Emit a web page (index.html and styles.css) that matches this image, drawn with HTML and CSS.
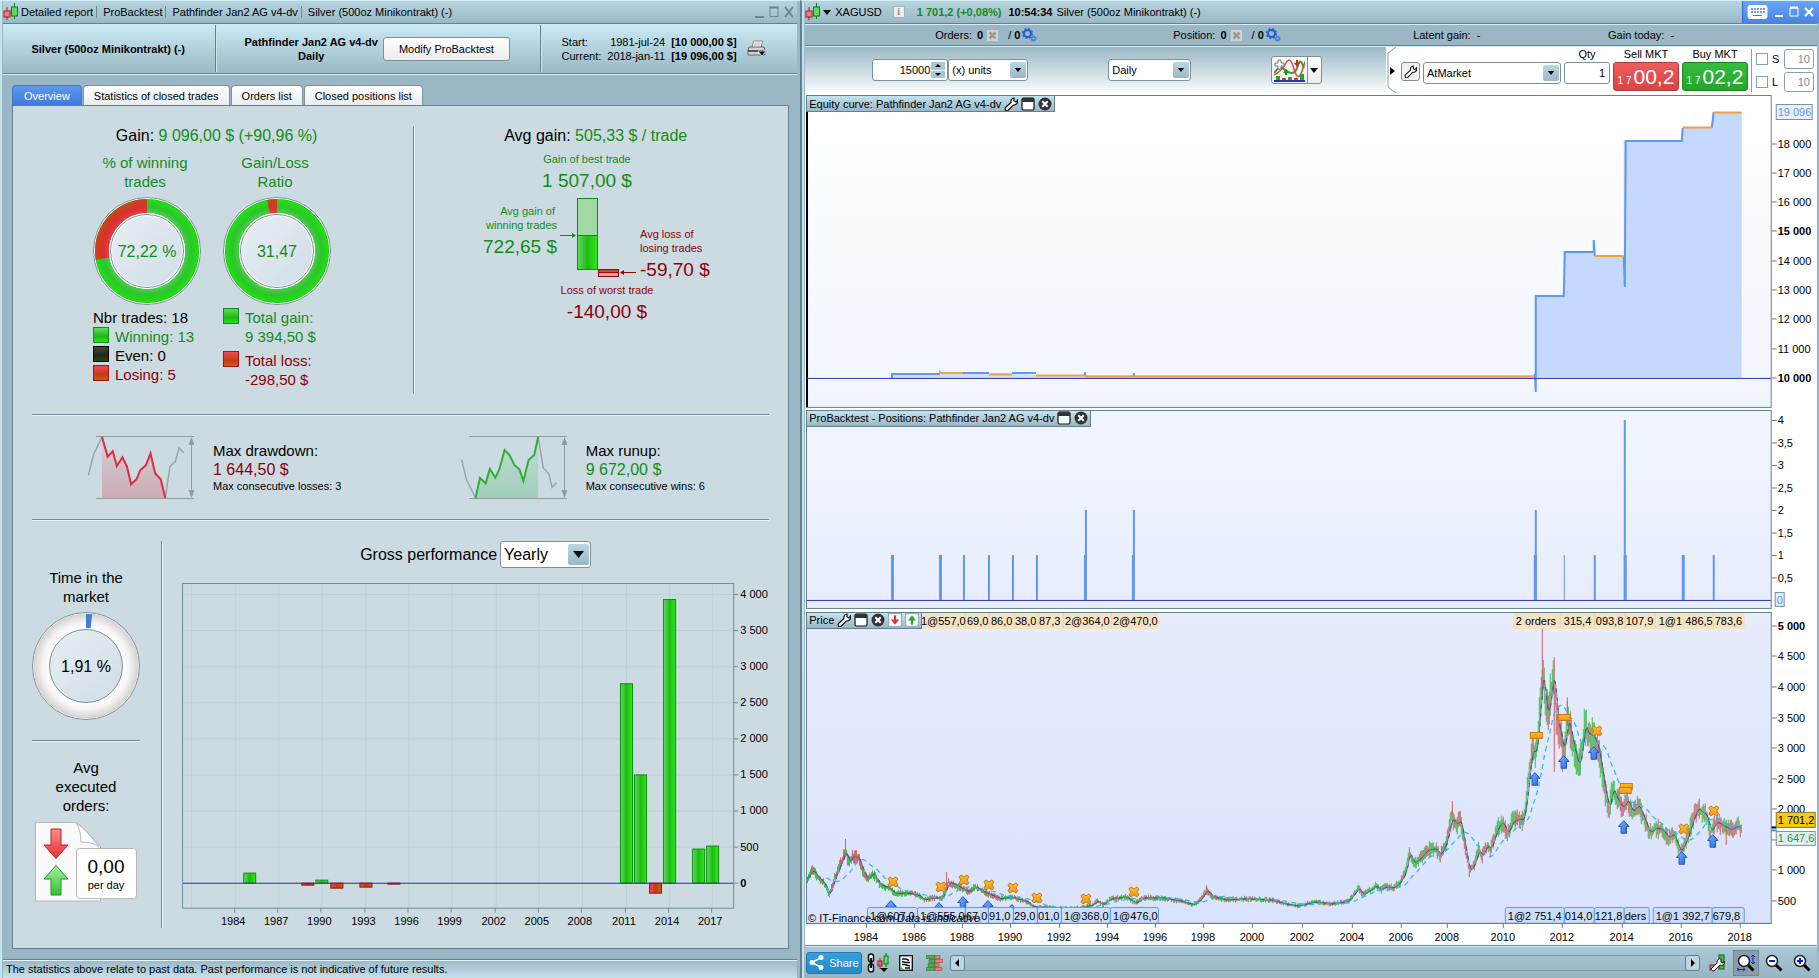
FILE: index.html
```html
<!DOCTYPE html>
<html lang="en">
<head>
    <meta charset="UTF-8">
    <meta name="viewport" content="width=device-width, initial-scale=1.0">
    <title>Detailed report - ProBacktest</title>
    <link rel="stylesheet" href="styles.css">
</head>
<body>
    <!-- shared symbols -->
    <svg class="defs" width="0" height="0" aria-hidden="true">
        <defs>
            <linearGradient id="gBar"><stop offset="0" stop-color="#5fdc5f"/><stop offset=".5" stop-color="#1fba14"/><stop offset="1" stop-color="#2bee17"/></linearGradient>
            <linearGradient id="rBar"><stop offset="0" stop-color="#f04a55"/><stop offset=".5" stop-color="#c43a10"/><stop offset="1" stop-color="#d05a18"/></linearGradient>
            <linearGradient id="gDown" x2="0" y2="1"><stop offset="0" stop-color="#a0f0a0"/><stop offset="1" stop-color="#35c035"/></linearGradient>
            <linearGradient id="rDown" x2="0" y2="1"><stop offset="0" stop-color="#ff8a8a"/><stop offset="1" stop-color="#e83030"/></linearGradient>
            <linearGradient id="bDown" x2="1" y2="1"><stop offset="0" stop-color="#7db2ff"/><stop offset="1" stop-color="#2a68dd"/></linearGradient>
            <linearGradient id="oDown" x2="0" y2="1"><stop offset="0" stop-color="#ffb92e"/><stop offset="1" stop-color="#f09a18"/></linearGradient>
            <linearGradient id="disc" x2="1" y2="1"><stop offset="0" stop-color="#e8eff3"/><stop offset="1" stop-color="#cfdde5"/></linearGradient>
            <linearGradient id="ddFade" x2="0" y2="1"><stop offset="0" stop-color="#d83b4a" stop-opacity=".05"/><stop offset="1" stop-color="#d83b4a" stop-opacity=".3"/></linearGradient>
            <linearGradient id="ruFade" x2="0" y2="1"><stop offset="0" stop-color="#2fb04a" stop-opacity=".05"/><stop offset="1" stop-color="#2fb04a" stop-opacity=".28"/></linearGradient>
            <radialGradient id="gRing" gradientUnits="userSpaceOnUse" cx="54" cy="54" r="54"><stop offset=".68" stop-color="#50d050"/><stop offset=".82" stop-color="#2cc42c"/><stop offset=".94" stop-color="#20e010"/><stop offset="1" stop-color="#159a12"/></radialGradient>
            <radialGradient id="rRing" gradientUnits="userSpaceOnUse" cx="54" cy="54" r="54"><stop offset=".68" stop-color="#f03a42"/><stop offset=".82" stop-color="#d83030"/><stop offset="1" stop-color="#c05010"/></radialGradient>
            <radialGradient id="wRing" gradientUnits="userSpaceOnUse" cx="54" cy="54" r="54"><stop offset=".68" stop-color="#fff"/><stop offset=".8" stop-color="#f6f4f4"/><stop offset="1" stop-color="#cfcbcb"/></radialGradient>
            <linearGradient id="bgEquity" x2="0" y2="1"><stop offset="0" stop-color="#fff"/><stop offset="1" stop-color="#f1f5fe"/></linearGradient>
            <linearGradient id="bgPos" x2="0" y2="1"><stop offset="0" stop-color="#f1f5fe"/><stop offset="1" stop-color="#e7edfd"/></linearGradient>
            <linearGradient id="bgPrice" x2="0" y2="1"><stop offset="0" stop-color="#e7edfe"/><stop offset="1" stop-color="#dae3fd"/></linearGradient>
        </defs>
        <symbol id="candles" viewBox="0 0 16 18">
            <path d="M4 4v13" stroke="#a01c1c"/><rect x="1" y="8" width="6" height="6" fill="#f08080" stroke="#a01c1c"/>
            <path d="M11.500 0v16" stroke="#0c7a1a"/><rect x="8.500" y="4" width="6" height="9" fill="#5ce05c" stroke="#0c7a1a"/>
        </symbol>
        <symbol id="down" viewBox="0 0 8 5"><path d="M0 0h8L4 5z"/></symbol>
        <symbol id="wrench" viewBox="0 0 14 14">
            <path d="M1.500 12.500c-1-1 0-2 .5-2.500l5-4.500c-.5-2 .5-4 3-4.500v3l2 1 1.500-2c.8 3-1 5.200-4.200 5l-5 5c-.8 1-2 1.200-2.800.5z" fill="#fff" stroke="#111" stroke-width="1.200"/>
        </symbol>
        <symbol id="win" viewBox="0 0 14 14">
            <rect x="1" y="1" width="12" height="12" rx="1.500" fill="#fff" stroke="#111" stroke-width="1.200"/><path d="M1 5V2q0-1 1-1h10q1 0 1 1v3z" fill="#333"/>
        </symbol>
        <symbol id="close" viewBox="0 0 14 14">
            <circle cx="7" cy="7" r="6.500" fill="#333"/><path d="M4.300 4.300l5.400 5.400M9.700 4.300L4.300 9.700" stroke="#fff" stroke-width="2"/>
        </symbol>
        <symbol id="cross" viewBox="0 0 11 11"><rect width="11" height="11" fill="#d2d2d2"/><path d="M2.500 2.500l6 6M8.500 2.500l-6 6" stroke="#999" stroke-width="2.500"/></symbol>
        <symbol id="gears" viewBox="0 0 15 14">
            <circle cx="5.500" cy="5.500" r="3.500" fill="none" stroke="#2260c8" stroke-width="2"/><circle cx="5.500" cy="5.500" r="4.800" fill="none" stroke="#2260c8" stroke-width="1.500" stroke-dasharray="2 1.770"/>
            <circle cx="11.500" cy="10.500" r="1.800" fill="none" stroke="#4580e0" stroke-width="1.500"/><circle cx="11.500" cy="10.500" r="2.800" fill="none" stroke="#4580e0" stroke-dasharray="1.200 1"/>
        </symbol>
        <symbol id="sheetDown" viewBox="0 0 12 12"><rect x=".5" y=".5" width="11" height="11" fill="#fff" stroke="#9aacc0"/><path d="M6 2v4" stroke="#e03030" stroke-width="2"/><path d="M2.500 5.500h7L6 10z" fill="#e03030"/></symbol>
        <symbol id="sheetUp" viewBox="0 0 12 12"><rect x=".5" y=".5" width="11" height="11" fill="#fff" stroke="#9aacc0"/><path d="M6 10V6" stroke="#2aa82a" stroke-width="2"/><path d="M2.500 6.500h7L6 2z" fill="#2aa82a"/></symbol>
        <symbol id="glass" viewBox="0 0 18 18"><path d="M10.500 10.500l6 6" stroke="#000" stroke-width="3"/><circle cx="7" cy="7" r="5.500" fill="#fff" stroke="#222" stroke-width="1.500"/></symbol>
        <symbol id="orderUp" viewBox="0 0 12 14"><path d="M6 .7l5.300 5.800h-2.600v6.800H3.300V6.500H.7z" fill="url(#bDown)" stroke="#1f57c4"/></symbol>
        <symbol id="orderX" viewBox="0 0 12 12"><path d="M3 1l3 2 3-2 2 2-2 3 2 3-2 2-3-2-3 2-2-2 2-3-2-3z" fill="url(#oDown)" stroke="#c8780a"/></symbol>
    </svg>

    <div class="desktop">
        <section class="report">
            <header class="titlebar">
                <svg class="i-candles"><use href="#candles"/></svg>
                <span class="crumb">Detailed report</span>
                <span class="crumb">ProBacktest</span>
                <span class="crumb">Pathfinder Jan2 AG v4-dv</span>
                <span class="crumb">Silver (500oz Minikontrakt) (-)</span>
                <svg class="win-ctl" width="40" height="14" viewBox="0 0 40 14" fill="none" stroke="#668796"><path d="M0 12h9" stroke-width="2"/><path d="M15 2.500h8v9h-8z"/><path d="M14.500 2.500h9" stroke-width="2"/><path d="M30 2l8 10M38 2l-8 10" stroke-width="2"/></svg>
            </header>

            <div class="summary">
                <div class="sum-instrument"><b>Silver (500oz Minikontrakt) (-)</b></div>
                <div class="sum-system">
                    <b>Pathfinder Jan2 AG v4-dv<br>Daily</b>
                    <button class="btn-modify" type="button">Modify ProBacktest</button>
                </div>
                <div class="sum-dates">
                    <dl>
                        <dt>Start:</dt><dd>1981-jul-24</dd><dd><b>[10 000,00 $]</b></dd>
                        <dt>Current:</dt><dd>2018-jan-11</dd><dd><b>[19 096,00 $]</b></dd>
                    </dl>
                    <svg width="20" height="18" viewBox="0 0 20 18"><path d="M5 8l1.500-7h9L14 8z" fill="#fff" stroke="#888"/><path d="M7.500 3h6M7 5h6" stroke="#aaa"/><path d="M2 7h15l1 3v5H1v-5z" fill="#d0d3d5" stroke="#666"/><path d="M1 11h16" stroke="#555" stroke-width="2"/><path d="M11 11h8l-4 5z" fill="#000" stroke="#fff" stroke-width=".7"/></svg>
                </div>
            </div>

            <nav class="tabs">
                <button class="tab active" type="button">Overview</button>
                <button class="tab" type="button">Statistics of closed trades</button>
                <button class="tab" type="button">Orders list</button>
                <button class="tab" type="button">Closed positions list</button>
            </nav>

            <main class="panel">
                <div class="row-gain">
                    <div class="gain">
                        <p class="headline">Gain: <span class="pos">9 096,00 $ (+90,96 %)</span></p>
                        <div class="donuts">
                            <div class="donut-col">
                                <p class="donut-title pos">% of winning<br>trades</p>
                                <svg class="donut" viewBox="0 0 108 108">
                                    <circle cx="54" cy="54" r="53.500" fill="#fff" stroke="#7b8f99"/>
                                    <circle cx="54" cy="54" r="45" fill="none" stroke="url(#gRing)" stroke-width="14"/>
                                    <path d="M54 9A45 45 0 0 0 9.700 61.800" fill="none" stroke="url(#rRing)" stroke-width="14"/>
                                    <circle cx="54" cy="54" r="36.500" fill="url(#disc)" stroke="#fff" stroke-width="3"/><circle cx="54" cy="54" r="36.500" fill="none" stroke="#7b8f99"/>
                                    <text x="54" y="60" class="t-val pos">72,22 %</text>
                                </svg>
                                <p class="legend">Nbr trades: 18</p>
                                <p class="legend pos"><i class="sw sw-green"></i>Winning: 13</p>
                                <p class="legend"><i class="sw sw-black"></i>Even: 0</p>
                                <p class="legend neg"><i class="sw sw-red"></i>Losing: 5</p>
                            </div>
                            <div class="donut-col">
                                <p class="donut-title pos">Gain/Loss<br>Ratio</p>
                                <svg class="donut" viewBox="0 0 108 108">
                                    <circle cx="54" cy="54" r="53.500" fill="#fff" stroke="#7b8f99"/>
                                    <circle cx="54" cy="54" r="45" fill="none" stroke="url(#gRing)" stroke-width="14"/>
                                    <path d="M54 9A45 45 0 0 0 45.500 9.800" fill="none" stroke="url(#rRing)" stroke-width="14"/>
                                    <circle cx="54" cy="54" r="36.500" fill="url(#disc)" stroke="#fff" stroke-width="3"/><circle cx="54" cy="54" r="36.500" fill="none" stroke="#7b8f99"/>
                                    <text x="54" y="60" class="t-val pos">31,47</text>
                                </svg>
                                <p class="legend pos total"><i class="sw sw-green"></i><span>Total gain:<br>9 394,50 $</span></p>
                                <p class="legend neg total"><i class="sw sw-red"></i><span>Total loss:<br>-298,50 $</span></p>
                            </div>
                        </div>
                    </div>
                    <div class="avg-gain">
                        <p class="headline">Avg gain: <span class="pos">505,33 $ / trade</span></p>
                        <svg class="trade-diagram" viewBox="469 145 252 185">
                            <g class="pos-fill">
                                <text x="586" y="163" class="t-s mid">Gain of best trade</text>
                                <text x="586" y="187" class="t-l mid">1 507,00 $</text>
                                <text x="554" y="215" class="t-s end">Avg gain of</text>
                                <text x="556" y="229" class="t-s end">winning trades</text>
                                <text x="556" y="253" class="t-l end">722,65 $</text>
                            </g>
                            <g class="neg-fill">
                                <text x="639" y="238" class="t-s">Avg loss of</text>
                                <text x="639" y="252" class="t-s">losing trades</text>
                                <text x="639" y="276" class="t-l">-59,70 $</text>
                                <text x="606" y="294" class="t-s mid">Loss of worst trade</text>
                                <text x="606" y="318" class="t-l mid">-140,00 $</text>
                            </g>
                            <rect x="576.500" y="198.500" width="20" height="37" fill="#a0dba3" stroke="#128c12"/>
                            <rect x="576.500" y="235.500" width="20" height="34" fill="url(#gBar)" stroke="#128c12"/>
                            <rect x="597.500" y="269.500" width="20" height="3" fill="#cf4a2c" stroke="#8c0c0c"/>
                            <rect x="597.500" y="272.500" width="20" height="4" fill="#f09a98" stroke="#8c0c0c"/>
                            <path d="M559 235.500h13" stroke="#128c12"/><path d="M571 233l4 2.500-4 2.500z" fill="#128c12"/>
                            <path d="M635 272.500h-13" stroke="#8c0c0c"/><path d="M623 270l-4 2.500 4 2.500z" fill="#8c0c0c"/>
                        </svg>
                    </div>
                </div>

                <div class="row-extremes">
                    <div class="extreme">
                        <svg width="106" height="66" viewBox="0 0 106 66" fill="none">
                            <path d="M14 3L19.700 22.700 24.800 17.300 28.800 32 34.400 23.300 39 32.700 43.100 50.300 48.700 45 52.300 36 57.900 31.300 62.500 19.300 67.100 39.300 72.700 45.300 77.300 64H14z" fill="url(#ddFade)"/>
                            <path d="M8 2.500h98M8 64.500h98M103.500 8v52" stroke="#8d9ba3"/><path d="M103.500 3l-3 8h6zM103.500 64l-3-8h6z" fill="#8d9ba3"/>
                            <path d="M.3 41.300L5.400 21 14 3M77.300 64l4.600-31.300 5.600-5.700L91 13.700l4.700 5" stroke="#97a5ad" stroke-width="1.500"/>
                            <path d="M14 3L19.700 22.700 24.800 17.300 28.800 32 34.400 23.300 39 32.700 43.100 50.300 48.700 45 52.300 36 57.900 31.300 62.500 19.300 67.100 39.300 72.700 45.300 77.300 64" stroke="#e02b3a" stroke-width="2"/>
                        </svg>
                        <div>
                            <p class="ex-label">Max drawdown:</p>
                            <p class="ex-value neg">1 644,50 $</p>
                            <p class="ex-note">Max consecutive losses: 3</p>
                        </div>
                    </div>
                    <div class="extreme">
                        <svg width="106" height="66" viewBox="0 0 106 66" fill="none">
                            <path d="M14.500 64L19 44 24.700 49.300 28.800 35 34.400 43.700 38.500 35 43.600 16 48.700 21.300 53.300 31 58.400 35.300 62.400 47 67.600 26 73.200 21 77.200 3V64z" fill="url(#ruFade)"/>
                            <path d="M8 2.500h98M8 64.500h98M103.500 8v52" stroke="#8d9ba3"/><path d="M103.500 3l-3 8h6zM103.500 64l-3-8h6z" fill="#8d9ba3"/>
                            <path d="M.7 25.700L5.300 45 14.500 64M77.200 3L82.300 34l5.700 6 3 13.300 4.600-4.600" stroke="#97a5ad" stroke-width="1.500"/>
                            <path d="M14.500 64L19 44 24.700 49.300 28.800 35 34.400 43.700 38.500 35 43.600 16 48.700 21.300 53.300 31 58.400 35.300 62.400 47 67.600 26 73.200 21 77.200 3" stroke="#2faf38" stroke-width="2"/>
                        </svg>
                        <div>
                            <p class="ex-label">Max runup:</p>
                            <p class="ex-value pos">9 672,00 $</p>
                            <p class="ex-note">Max consecutive wins: 6</p>
                        </div>
                    </div>
                </div>

                <div class="row-perf">
                    <div class="market">
                        <p class="donut-title">Time in the<br>market</p>
                        <svg class="donut" viewBox="0 0 108 108">
                            <circle cx="54" cy="54" r="53.500" fill="#fff" stroke="#7b8f99"/>
                            <circle cx="54" cy="54" r="45" fill="none" stroke="url(#wRing)" stroke-width="15"/>
                            <path d="M54 9A45 45 0 0 1 59.400 9.300" fill="none" stroke="#3d80d8" stroke-width="14"/>
                            <circle cx="54" cy="54" r="36.500" fill="url(#disc)" stroke="#7b8f99"/>
                            <text x="54" y="60" class="t-val">1,91 %</text>
                        </svg>
                        <hr class="rule">
                        <p class="donut-title">Avg<br>executed<br>orders:</p>
                        <svg class="orders-icon" width="102" height="80" viewBox="0 0 102 80">
                            <path d="M.5.500h40q8 4 25 24v54.500H.5z" fill="#fafafa" stroke="#b4b8bb"/>
                            <path d="M41 1q5 6 5 19 12 0 18 5Q52 8 41 1z" fill="#fff" stroke="#b4b8bb"/>
                            <path d="M16 7h10v16h7L21 36.500 9 23h7z" fill="url(#rDown)" stroke="#b82222"/>
                            <path d="M16 73h10V57h7L21 43.500 9 57h7z" fill="url(#gDown)" stroke="#249124"/>
                            <rect x="41.500" y="26.500" width="60" height="50" rx="3" fill="#fff" stroke="#b4b8bb"/>
                            <text x="71" y="51" class="t-count">0,00</text>
                            <text x="71" y="67" class="t-s mid">per day</text>
                        </svg>
                    </div>
                    <div class="perf">
                        <div class="perf-head">
                            <label for="period">Gross performance</label>
                            <span class="combo combo-lg"><select id="period"><option>Yearly</option><option>Monthly</option></select><svg class="arrow"><use href="#down"/></svg></span>
                        </div>
                        <svg id="perfChart" class="chart" viewBox="162 580 606 347"></svg>
                    </div>
                </div>
            </main>

            <footer class="disclaimer">The statistics above relate to past data. Past performance is not indicative of future results.</footer>
        </section>

        <section class="charts">
            <header class="titlebar">
                <svg class="i-candles"><use href="#candles"/></svg>
                <svg class="i-down"><use href="#down"/></svg>
                <span class="symbol">XAGUSD</span>
                <span class="info">i</span>
                <b class="quote pos">1 701,2 (+0,08%)</b>
                <b>10:54:34</b>
                <span class="name">Silver (500oz Minikontrakt) (-)</span>
                <span class="win-box">
                    <svg width="68" height="14" viewBox="0 0 68 14" fill="none" stroke="#fff"><rect x="1" y=".5" width="19" height="13" rx="2" fill="#fff"/><path d="M4 4h14M4 7h14" stroke="#4a80dc" stroke-width="1.500" stroke-dasharray="2 1"/><path d="M6 10.500h9" stroke="#4a80dc"/><path d="M28 11h8" stroke-width="2"/><path d="M43 3h8v8h-8z"/><path d="M43 2.500h8" stroke-width="2"/><path d="M58 3l8 8M66 3l-8 8" stroke-width="2"/></svg>
                </span>
            </header>

            <div class="status">
                <span>Orders: <b>0</b> <svg class="i-x"><use href="#cross"/></svg><span class="slash">/ <b>0</b></span><svg class="i-gears"><use href="#gears"/></svg></span>
                <span>Position: <b>0</b> <svg class="i-x"><use href="#cross"/></svg><span class="slash">/ <b>0</b></span><svg class="i-gears"><use href="#gears"/></svg></span>
                <span>Latent gain:&nbsp; -</span>
                <span>Gain today:&nbsp; -</span>
            </div>

            <div class="toolbar">
                <div class="tools">
                    <span class="spin"><input type="text" value="15000" aria-label="Number of bars"><span class="spin-btns"><button type="button" aria-label="More"><svg viewBox="0 0 8 5"><path d="M1 4h6L4 1z"/></svg></button><button type="button" aria-label="Less"><svg viewBox="0 0 8 5"><path d="M1 1h6L4 4z"/></svg></button></span></span>
                    <span class="combo combo-units"><select aria-label="Units"><option>(x) units</option></select><svg class="arrow"><use href="#down"/></svg></span>
                    <span class="combo combo-frame"><select aria-label="Timeframe"><option>Daily</option></select><svg class="arrow"><use href="#down"/></svg></span>
                    <button class="indicator" type="button" aria-label="Add indicator">
                        <svg width="31" height="23" viewBox="0 0 31 23" fill="none"><path d="M0 14Q6 6 10 10t8 4 6-8 6 3" stroke="#2da32d" stroke-width="2"/><path d="M0 16Q8 12 12 4t8 6 8 2 3-9" stroke="#e04545" stroke-width="1.500"/><path d="M4 1h3v3h3v3H7v3H4V7H1V4h3z" fill="#fff" stroke="#777"/><path d="M23 1v4" stroke="#d22" stroke-width="2"/><path d="M20 4h6l-3 4z" fill="#d22"/><path d="M12 16v-3" stroke="#1a9a1a" stroke-width="2"/><path d="M9 14h6l-3-4z" fill="#1a9a1a"/><path d="M0 22h31" stroke="#2233bb" stroke-width="2"/><path d="M2 21v-4h4v4zM14 21v-3h4v3zM26 21v-6h4v6z" fill="#23a823"/><path d="M8 21v-2h4v2zM20 21v-2h4v2z" fill="#d33"/></svg>
                        <i class="sep"></i><svg class="i-down"><use href="#down"/></svg>
                    </button>
                </div>
                <div class="order">
                    <svg class="handle" viewBox="0 0 10 46"><path d="M9 0L1 6v34l8 6" fill="none" stroke="#8aa0ab"/><path d="M3 20l5 4-5 4z"/></svg>
                    <button class="btn-wrench" type="button" aria-label="Order settings"><svg><use href="#wrench"/></svg></button>
                    <span class="combo combo-order"><select aria-label="Order type"><option>AtMarket</option></select><svg class="arrow"><use href="#down"/></svg></span>
                    <div class="field"><label for="qty">Qty</label><input id="qty" type="text" value="1"></div>
                    <div class="field"><label for="sell">Sell MKT</label><button id="sell" class="btn-sell" type="button"><small>1 7</small>00,2</button></div>
                    <div class="field"><label for="buy">Buy MKT</label><button id="buy" class="btn-buy" type="button"><small>1 7</small>02,2</button></div>
                    <div class="stops">
                        <input type="checkbox" id="stop"><label for="stop">S</label><input type="text" value="10" aria-label="Stop distance">
                        <input type="checkbox" id="limit"><label for="limit">L</label><input type="text" value="10" aria-label="Limit distance">
                    </div>
                </div>
            </div>

            <div class="plots">
                <div class="plot">
                    <svg id="equityChart" class="chart" viewBox="805 95 1012 315"></svg>
                    <div class="plot-title">Equity curve: Pathfinder Jan2 AG v4-dv <svg><use href="#wrench"/></svg><svg><use href="#win"/></svg><svg><use href="#close"/></svg></div>
                </div>
                <div class="plot">
                    <svg id="positionChart" class="chart" viewBox="805 410 1012 202"></svg>
                    <div class="plot-title">ProBacktest - Positions: Pathfinder Jan2 AG v4-dv <svg><use href="#win"/></svg><svg><use href="#close"/></svg></div>
                </div>
                <div class="plot">
                    <svg id="priceChart" class="chart" viewBox="805 612 1012 334"></svg>
                    <div class="plot-title">Price <svg><use href="#wrench"/></svg><svg><use href="#win"/></svg><svg><use href="#close"/></svg><svg><use href="#sheetDown"/></svg><svg><use href="#sheetUp"/></svg></div>
                </div>
            </div>

            <div class="navbar">
                <button class="btn-share" type="button"><svg width="15" height="15" viewBox="0 0 15 15"><path d="M12 2.500L3 7.500l9 5" stroke="#fff" stroke-width="1.500" fill="none"/><circle cx="12" cy="2.500" r="2.500" fill="#fff"/><circle cx="3" cy="7.500" r="2.500" fill="#fff"/><circle cx="12" cy="12.500" r="2.500" fill="#fff"/></svg>Share</button>
                <svg class="link-icon" width="23" height="20" viewBox="0 0 23 20"><g fill="none" stroke="#111" stroke-width="1.500"><rect x="1.500" y="1" width="5" height="8" rx="2.500" fill="#fff"/><rect x="1.500" y="11" width="5" height="8" rx="2.500" fill="#fff"/><path d="M4 5v10" stroke-width="2"/></g><path d="M13 5v11" stroke="#a01c1c"/><rect x="11" y="8" width="4" height="5" fill="#f06060" stroke="#a01c1c"/><path d="M19 0v14" stroke="#0c7a1a"/><rect x="17" y="3" width="4" height="8" fill="#5ce05c" stroke="#0c7a1a"/><path d="M13 15h8l-4 4z"/></svg>
                <svg class="list-icon" width="14" height="16" viewBox="0 0 14 16"><rect x=".7" y=".7" width="12.600" height="14.600" fill="#fff" stroke="#111" stroke-width="1.400"/><path d="M9 1h4v4z" fill="#e99"/><path d="M1 11l4 4H1z" fill="#4b4"/><path d="M3 4h4l3 1.500M3 6.500l4 1h4M3 9.500h3l5 1.500M6 13h5" stroke="#111" stroke-width="1.500" fill="none"/></svg>
                <svg class="depth-icon" width="17" height="16" viewBox="0 0 17 16"><path d="M0 .5h9v3H0zM3 4.500h6v3H3zM2 8.500h7v3H2zM0 12.500h9v3H0z" fill="#4fae4f" stroke="#2b6e2b" stroke-width=".6"/><path d="M9 .5h5v3H9zM9 4.500h8v3H9zM9 8.500h4v3H9zM9 12.500h7v3H9z" fill="#e08080" stroke="#a04040" stroke-width=".6"/></svg>
                <div class="scroll"><button type="button" aria-label="Scroll left"><svg viewBox="0 0 6 8"><path d="M5 0v8L1 4z"/></svg></button><button type="button" aria-label="Scroll right"><svg viewBox="0 0 6 8"><path d="M1 0v8l4-4z"/></svg></button></div>
                <button class="nav-btn" type="button" aria-label="Chart settings"><svg viewBox="0 0 18 18"><rect x="1" y="11" width="5" height="5" fill="#d87070" stroke="#822"/><rect x="10" y="1" width="5" height="14" fill="#3fbf3f" stroke="#175c17"/><path d="M2 15l6-6c0-3 2-5 4-4v3l2 1 1-2c1 3-1 5-4 4l-6 6c-2 0-3-1-3-2z" fill="#fff" stroke="#111"/></svg></button>
                <button class="nav-btn on" type="button" aria-label="Auto zoom"><svg viewBox="0 0 18 18"><use href="#glass" width="18" height="18"/><path d="M16 1v9M14 3l2-2 2 2M14 8l2 2 2-2M0 15.500h8M2 13.500l-2 2 2 2M6 13.500l2 2-2 2" stroke="#1020d0" fill="none"/></svg></button>
                <button class="nav-btn" type="button" aria-label="Zoom out"><svg viewBox="0 0 18 18"><use href="#glass" width="18" height="18"/><path d="M4 7h6" stroke="#1020d0" stroke-width="2"/></svg></button>
                <button class="nav-btn" type="button" aria-label="Zoom in"><svg viewBox="0 0 18 18"><use href="#glass" width="18" height="18"/><path d="M4 7h6M7 4v6" stroke="#1020d0" stroke-width="2"/></svg></button>
            </div>
        </section>
    </div>
    <script src="charts.js"></script>
</body>
</html>
```
FILE: styles.css
```css
* {
    box-sizing: border-box;
}
body {
    margin: 0;
    font-family: "Liberation Sans", Arial, sans-serif;
    font-size: 11px;
    color: #000;
    background: #9bb7c5;
}
p, dl, dd, dt {
    margin: 0;
}
svg {
    flex: none;
}
button, input, select {
    font: inherit;
    color: inherit;
}
.defs {
    position: absolute;
}
.pos {
    color: #138c1b;
    fill: #138c1b;
}
.neg {
    color: #8c0009;
    fill: #8c0009;
}
.desktop {
    display: flex;
    min-height: 100vh;
}
.report {
    flex: 800 1 0;
    min-width: 0;
    display: flex;
    flex-direction: column;
    border-left: 2px solid #c4e4f0;
    padding: 0 3px 2px 1px;
    border-top: 1px solid #d4eef6;
}
.charts {
    flex: 1019 1 0;
    min-width: 0;
    display: flex;
    flex-direction: column;
    border-left: 2px solid #64808e;
    box-shadow: inset 2px 0 0 #c4e4f0;
    padding: 0 2px 0 3px;
    border-top: 1px solid #d4eef6;
}

/* title bars */
.titlebar {
    display: flex;
    align-items: center;
    height: 23px;
    background: linear-gradient(#b5d4e0, #9bb7c5);
    border-bottom: 1px solid #64808e;
    white-space: nowrap;
}
.i-candles {
    width: 16px;
    height: 18px;
    margin-right: 2px;
}
.i-down {
    width: 8px;
    height: 5px;
}
.crumb + .crumb {
    border-left: 1px solid #6e8b99;
    margin-left: 3px;
    padding-left: 6px;
}
.win-ctl {
    margin-left: auto;
    margin-right: 2px;
}
.symbol {
    margin-left: 4px;
}
.info {
    width: 12px;
    height: 12px;
    margin: 0 12px 0 11px;
    border: 1px solid #a9b4ba;
    background: #eee;
    color: #888;
    font: bold 10px/10px "Liberation Serif", serif;
    text-align: center;
}
.quote {
    margin-right: 7px;
}
.name {
    margin-left: 4px;
}
.win-box {
    align-self: stretch;
    display: flex;
    align-items: center;
    margin-left: auto;
    margin-right: -2px;
    padding: 0 4px;
    border-left: 1px solid #2d68c4;
    background: linear-gradient(#68a5fa, #4c83e0);
}

/* report header */
.summary {
    display: grid;
    grid-template-columns: 212fr 324fr 257fr;
    height: 50px;
    padding: 1px 0;
    background: linear-gradient(#cbebf6, #9bb7c5);
    border-bottom: 1px solid #64808e;
    box-shadow: 0 1px 0 #d8eef5;
    line-height: 14px;
}
.summary > div {
    display: flex;
    align-items: center;
    justify-content: center;
    gap: 5px;
    padding-right: 2px;
    text-align: center;
}
.summary > div + div {
    border-left: 1px solid #64808e;
    box-shadow: inset 1px 0 0 #d0e6ee;
}
.summary dl {
    display: grid;
    grid-template-columns: auto auto auto;
    column-gap: 6px;
    text-align: right;
}
.summary dt {
    text-align: left;
}
.summary .sum-dates {
    padding-right: 10px;
}
.sum-dates svg {
    margin-left: 5px;
}
.btn-modify {
    height: 24px;
    padding: 0 15px;
    border: 1px solid #7b929d;
    border-radius: 3px;
    background: linear-gradient(#fff, #ececec);
}

/* tabs */
.tabs {
    display: flex;
    margin: 11px 0 0 9px;
}
.tab {
    height: 20px;
    padding: 0 10px;
    border: 1px solid #7b929d;
    border-bottom: 0;
    border-radius: 4px 4px 0 0;
    background: linear-gradient(#fff, #e9eef1);
}
.tab + .tab {
    margin-left: 1px;
}
.tab.active {
    padding: 0 11px;
    background: linear-gradient(#5f97ef, #3f7bd8);
    border-color: #4577c2;
    color: #fff;
}
.panel {
    flex: 1;
    margin: 0 8px 10px 9px;
    padding: 0 19px 20px;
    border: 1px solid #64808e;
    background: #ccdbe2;
}

/* gain row */
.row-gain {
    display: grid;
    grid-template-columns: 381fr 354fr;
    padding: 20px 0;
    border-bottom: 1px solid #6f8c9a;
    box-shadow: 0 1px 0 #eaf5f9;
}
.gain {
    border-right: 1px solid #6f8c9a;
    box-shadow: 1px 0 0 #eaf5f9;
}
.headline {
    font-size: 16px;
    line-height: 19px;
    text-align: center;
}
.gain .headline {
    padding-right: 12px;
}
.donuts {
    display: flex;
    gap: 22px;
    margin: 8px 0 0 61px;
}
.donut-col {
    width: 108px;
    min-height: 241px;
}
.donut-title {
    font-size: 15px;
    line-height: 19px;
    text-align: center;
}
.donut-title.pos {
    padding-right: 4px;
}
.donut {
    display: block;
    width: 108px;
    height: 108px;
    margin: 6px 0 3px;
}
.t-val {
    font-size: 16px;
    text-anchor: middle;
}
.t-count {
    font-size: 19px;
    text-anchor: middle;
}
.legend {
    display: flex;
    gap: 6px;
    font-size: 15px;
    line-height: 19px;
    white-space: nowrap;
}
.total + .total {
    margin-top: 5px;
}
.sw {
    width: 16px;
    height: 16px;
    border: 1px solid #128c12;
}
.sw-green {
    background: linear-gradient(#5fdc5f, #1fba14 60%, #2be017);
}
.sw-red {
    border-color: #a01414;
    background: linear-gradient(#f04a55, #c43a10 60%, #d05a18);
}
.sw-black {
    border-color: #000;
    background: linear-gradient(#444, #1c2a14 60%, #24440e);
}
.avg-gain {
    padding-left: 8px;
}
.trade-diagram {
    display: block;
    width: 252px;
    margin: 0 auto;
}
.pos-fill {
    fill: #138c1b;
}
.neg-fill {
    fill: #8c0009;
}
.t-s {
    font-size: 11px;
}
.t-l {
    font-size: 19px;
}
.mid {
    text-anchor: middle;
}
.end {
    text-anchor: end;
}

/* drawdown / runup */
.row-extremes {
    display: grid;
    grid-template-columns: 372fr 308fr;
    height: 105px;
    padding-left: 56px;
    border-bottom: 1px solid #6f8c9a;
    box-shadow: 0 1px 0 #eaf5f9;
}
.extreme {
    display: flex;
    align-items: center;
    gap: 19px;
}
.ex-label {
    font-size: 15px;
    line-height: 19px;
}
.ex-value {
    font-size: 16px;
    line-height: 19px;
}
.ex-note {
    line-height: 14px;
}

/* performance row */
.row-perf {
    display: flex;
    margin-top: 21px;
}
.market {
    flex: none;
    width: 130px;
    min-height: 386px;
    padding: 27px 21px 0 0;
    border-right: 1px solid #6f8c9a;
    box-shadow: 1px 0 0 #eaf5f9;
}
.rule {
    margin: 20px 0 16px;
    border: 0;
    border-top: 1px solid #6f8c9a;
    border-bottom: 1px solid #eaf5f9;
}
.orders-icon {
    display: block;
    margin: 7px auto 0;
}
.perf {
    flex: 1;
    min-width: 0;
}
.perf-head {
    display: flex;
    justify-content: center;
    align-items: center;
    gap: 3px;
    padding-left: 20px;
    margin-bottom: 12px;
    font-size: 16px;
}
.chart {
    display: block;
    width: 100%;
    font-size: 11px;
}

/* drop-downs */
.combo {
    position: relative;
    display: block;
    flex: none;
}
.combo select {
    appearance: none;
    width: 100%;
    height: 22px;
    padding: 0 3px;
    border: 1px solid #7b929d;
    border-radius: 3px;
    background: #fff;
}
.combo .arrow {
    position: absolute;
    right: 2px;
    top: 3px;
    width: 16px;
    height: 16px;
    padding: 6px 4px;
    background: linear-gradient(#b8d8e4, #9bb7c5);
    border-radius: 2px;
    pointer-events: none;
}
.combo-lg {
    width: 91px;
}
.combo-lg select {
    height: 27px;
}
.combo-lg .arrow {
    width: 21px;
    height: 21px;
    padding: 7px 5px;
}
.combo-units {
    width: 80px;
}
.combo-frame {
    width: 83px;
    margin-left: 80px;
}
.combo-order {
    width: 138px;
}
.disclaimer {
    border-top: 1px solid #64808e;
    box-shadow: inset 0 1px 0 #e4f4fa;
    padding: 0 3px;
    line-height: 19px;
    background: linear-gradient(#9bb7c5, #c6e4f0);
}

/* trading bars */
.status {
    display: grid;
    grid-template-columns: 238fr 240fr 195fr 209fr;
    align-items: center;
    height: 22px;
    padding-left: 130px;
    border-top: 1px solid #d4eef6;
    border-bottom: 1px solid #64808e;
}
.status > span {
    display: flex;
    align-items: center;
    gap: 2px;
    white-space: pre;
}
.i-x {
    width: 11px;
    height: 11px;
    margin-left: 2px;
}
.i-gears {
    width: 15px;
    height: 14px;
}
.slash {
    margin-left: 8px;
}
.toolbar {
    display: flex;
    height: 49px;
    border-top: 1px solid #d4eef6;
    background: linear-gradient(#9bb7c5, #fff);
}
.tools {
    flex: 1;
    display: flex;
    align-items: center;
    padding: 0 0 2px 67px;
}
.spin {
    display: flex;
    width: 76px;
    height: 22px;
    padding: 2px;
    border: 1px solid #7b929d;
    border-radius: 3px;
    background: #fff;
}
.spin input {
    flex: 1;
    min-width: 0;
    padding: 0 1px;
    border: 0;
    background: none;
    text-align: right;
}
.spin-btns {
    display: flex;
    flex-direction: column;
    gap: 1px;
    width: 14px;
}
.spin-btns button {
    flex: 1;
    display: flex;
    align-items: center;
    justify-content: center;
    padding: 0;
    border: 0;
    background: #a9c7d4;
}
.spin-btns svg {
    width: 8px;
    height: 5px;
}
.indicator {
    display: flex;
    align-items: center;
    gap: 2px;
    height: 28px;
    margin-left: 80px;
    padding: 0 3px 0 2px;
    border: 1px solid #7b929d;
    border-radius: 3px;
    background: linear-gradient(#fff, #ececec);
}
.sep {
    align-self: stretch;
    width: 1px;
    background: #7b929d;
}
.order {
    display: flex;
    align-items: flex-start;
    gap: 3px;
    padding-right: 3px;
    background: #fff;
}
.handle {
    width: 10px;
    height: 46px;
    margin: 0 -2px 0 1px;
}
.btn-wrench {
    width: 19px;
    height: 19px;
    margin: 15px 0 0 3px;
    padding: 2px;
    border: 1px solid #7b929d;
    border-radius: 3px;
    background: #f2f2f2;
}
.btn-wrench svg {
    display: block;
    width: 13px;
    height: 13px;
}
.combo-order {
    margin-top: 15px;
}
.field {
    display: flex;
    flex-direction: column;
    align-items: center;
    line-height: 15px;
}
.field input {
    width: 46px;
    height: 22px;
    padding: 0 4px;
    border: 1px solid #7b929d;
    border-radius: 3px;
    text-align: right;
}
.field button {
    width: 66px;
    height: 29px;
    padding: 0;
    border: 1px solid #b53a3a;
    border-radius: 3px;
    background: linear-gradient(#ee5c5c, #d94444);
    color: #fff;
    font-size: 21px;
    line-height: 27px;
}
.field .btn-buy {
    border-color: #1c861c;
    background: linear-gradient(#33bd3d, #25a52d);
}
.field small {
    margin-right: 2px;
    font-size: 10px;
}
.stops {
    display: grid;
    grid-template-columns: 12px 8px 30px;
    grid-auto-rows: 20px;
    align-items: center;
    gap: 3px 4px;
    margin-top: 2px;
    padding-left: 4px;
    border-left: 1px solid #8aa0ab;
}
.stops input {
    height: 20px;
    width: 100%;
    margin: 0;
    padding: 0 3px;
    border: 1px solid #8a9fa9;
    border-radius: 3px;
    background: #fff;
    color: #888;
    text-align: right;
}
.stops input[type="checkbox"] {
    appearance: none;
    height: 12px;
    padding: 0;
    border-radius: 0;
}

/* plots */
.plot {
    position: relative;
    background: #fff;
}
.plot-title {
    position: absolute;
    left: 1px;
    top: 0;
    display: flex;
    align-items: center;
    gap: 3px;
    height: 17px;
    padding: 0 2px;
    border: 1px solid #64808e;
    background: linear-gradient(#c3e3ef, #9bb7c5);
    white-space: nowrap;
}
.plot-title svg {
    width: 14px;
    height: 14px;
}

/* bottom bar */
.navbar {
    display: flex;
    align-items: center;
    flex: 1;
    min-height: 32px;
    padding-bottom: 2px;
    border-top: 1px solid #d4eef6;
    background: linear-gradient(#a9c8d5, #97b3c1);
}
.btn-share {
    display: flex;
    align-items: center;
    gap: 5px;
    height: 22px;
    margin-left: 1px;
    padding: 0 2px;
    border: 1px solid #2579ae;
    border-radius: 3px;
    background: linear-gradient(#35a0dd, #2488c8);
    color: #fff;
}
.link-icon {
    margin-left: 5px;
}
.list-icon {
    margin-left: 9px;
}
.depth-icon {
    margin-left: 13px;
}
.scroll {
    flex: 1;
    display: flex;
    justify-content: space-between;
    height: 16px;
    margin: 0 5px 0 7px;
    border: 1px solid #7b97a5;
    border-radius: 3px;
}
.scroll button {
    width: 15px;
    margin: -1px;
    padding: 0;
    border: 1px solid #64808e;
    border-radius: 3px;
    background: #bcd6e1;
}
.scroll svg {
    width: 6px;
    height: 8px;
}
.nav-btn {
    width: 26px;
    height: 26px;
    padding: 3px;
    border: 1px solid transparent;
    background: none;
}
.nav-btn + .nav-btn {
    margin-left: 2px;
}
.nav-btn:last-child {
    margin-right: 2px;
}
.nav-btn svg {
    display: block;
    width: 18px;
    height: 18px;
}
.nav-btn.on {
    background: #899eab;
    border-color: #718894;
}
.strong {
    font-weight: bold;
}
```
FILE: charts.js
```js
function rect(x, y, w, h, attrs) {
    return `<rect x="${x}" y="${y}" width="${w}" height="${h}" ${attrs}/>`;
}
function line(d, stroke, extra = '') {
    return `<path d="${d}" fill="none" stroke="${stroke}" ${extra}/>`;
}
function text(x, y, str, cls = '', extra = '') {
    return `<text x="${x}" y="${y}" class="${cls}" ${extra}>${str}</text>`;
}
function draw(id, html) {
    document.getElementById(id).innerHTML = html;
}

// ---- gross performance per year
function drawPerformance() {
    let s = '';
    const xs = [191, 235, 278, 321, 365, 408, 451, 495, 538, 581, 625, 668, 711];
    const years = [null, 1984, 1987, 1990, 1993, 1996, 1999, 2002, 2005, 2008, 2011, 2014, 2017];
    xs.forEach((x, i) => {
        s += line(`M${x + 0.5} 584V907`, '#c0d0d8');
        if (years[i]) {
            s += line(`M${x - 0.5} 907v5`, '#6f8c9a') + text(x - 2, 924, years[i], 'mid');
        }
    });
    for (let i = 0; i <= 8; i++) {
        const y = 882.5 - i * 36;
        const label = i === 0 ? '0' : (i < 2 ? '500' : Math.floor(i / 2) + ' ' + (i % 2 ? '500' : '000'));
        s += line(`M183 ${y}H732`, '#c0d0d8') + line(`M732 ${y}h5`, '#6f8c9a');
        s += text(739, y + 3.5, label, i === 0 ? 'strong' : '');
    }
    const bars = [[243, 10], [301, -2], [315, 3], [330, -5], [359, -4], [387, -1], [619, 199], [633, 108], [648, -10], [662, 283], [691, 34], [705, 37]];
    bars.forEach(([x, h]) => {
        s += h > 0
            ? rect(x + 0.5, 882.5 - h, 12, h, 'fill="url(#gBar)" stroke="#128c12"')
            : rect(x + 0.5, 882.5, 12, -h, 'fill="url(#rBar)" stroke="#8c1414"');
    });
    s += line('M183 882.5H732', '#2a33b0');
    s += rect(182.5, 583.5, 550, 324, 'fill="none" stroke="#6f8c9a"');
    draw('perfChart', s);
}

function frame(top, bottom, bg) {
    return rect(806.5, top + 0.5, 965, bottom - top, `fill="url(#${bg})" stroke="#64808e"`);
}
function axis(labels) {
    return labels.map(([y, label, cls]) => line(`M1772 ${y}h5`, '#64808e') + text(1778, y + 4, label, cls)).join('');
}

// ---- equity curve
function drawEquity() {
    const blue = '#6297ee', orange = '#f0a140';
    let s = frame(95, 407, 'bgEquity');
    s += '<path d="M1535 378V296h29v-44h30v4h30V141h58v-13h31v-16h29V378z" fill="#c5d8fd"/>';
    s += '<path d="M892 378v-4h48v-1h72v1l24 1h499v3z" fill="#cfdffd"/>';
    s += line('M807 96V407', '#000', 'stroke-width="2"');
    const w = 'stroke-width="2"';
    s += line('M892 378v-4h48M963 373h26M1012 373h24M1085 375v-3M1134 376v-3', blue, w);
    s += line('M940 374v-2l1 1h22M989 374.500h23M1036 375.500h50v1h449', orange, w);
    s += line('M1535 374l1 18V296h28l1-44h29v-12l1 16M1624 256l1 31 1-146h56l1-13M1712 128l2-16', blue, w);
    s += line('M1595 256h29M1683 127.500h29M1714 112.500h28', orange, w);
    s += line('M807 378.500H1771', '#2a33b0');
    const labels = [[378, '10 000', 'strong'], [349, '11 000'], [319, '12 000'], [290, '13 000'], [261, '14 000'], [231, '15 000', 'strong'], [202, '16 000'], [173, '17 000'], [144, '18 000']];
    s += axis(labels);
    s += rect(1776.5, 104.5, 36, 15, 'fill="#e8effd" stroke="#7b929d"') + text(1778, 116, '19 096', '', 'fill="#6297ee"');
    draw('equityChart', s);
}

// ---- open positions
function drawPositions() {
    let s = frame(410, 608, 'bgPos');
    // x, width, contracts
    const pos = [[891, 3, 1], [939, 3, 1], [963, 2, 1], [988, 2, 1], [1012, 2, 1], [1036, 2, 1], [1084, 2, 1], [1085, 2, 2], [1132, 2, 1], [1133, 2, 2],
        [1534, 3, 1], [1535, 2, 2], [1564, 1, 1], [1594, 2, 1], [1624, 2, 4], [1624, 3, 1], [1682, 3, 1], [1713, 2, 1]];
    pos.forEach(([x, w, n]) => s += rect(x, 600 - n * 45, w, n * 45, 'fill="#6297ee"'));
    s += line('M807 600.5H1771', '#2a33b0');
    for (let i = 1; i <= 8; i++) {
        s += axis([[600.5 - i * 22.5, String(i / 2).replace('.', ',')]]);
    }
    s += rect(1775.5, 592.5, 9, 14, 'fill="#e0eafd" stroke="#7b929d"') + text(1777, 604, '0', '', 'fill="#6297ee"');
    draw('positionChart', s);
}

// ---- price, orders and tags
const pricePath = [[807, 878], [812, 870], [818, 878], [824, 884], [829, 895], [834, 878], [840, 864], [845, 850], [848, 863], [852, 856], [858, 858], [862, 870], [867, 880], [872, 873], [880, 885], [888, 888], [895, 894], [905, 893], [917, 895], [924, 900], [932, 898], [942, 898], [948, 882], [955, 885], [962, 889], [968, 892], [975, 887], [985, 893], [1000, 899], [1010, 897], [1025, 901], [1033, 907], [1060, 908], [1080, 908], [1092, 905], [1097, 901], [1103, 905], [1110, 899], [1125, 897], [1135, 903], [1143, 898], [1160, 898], [1180, 901], [1193, 905], [1200, 900], [1206, 890], [1212, 897], [1225, 900], [1245, 899], [1270, 900], [1285, 904], [1297, 906], [1315, 902], [1330, 904], [1345, 902], [1350, 899], [1358, 888], [1362, 895], [1370, 890], [1375, 886], [1380, 890], [1385, 887], [1393, 888], [1400, 882], [1405, 872], [1409, 852], [1413, 864], [1420, 858], [1427, 850], [1435, 849], [1440, 855], [1446, 842], [1451, 818], [1456, 825], [1460, 820], [1464, 845], [1469, 872], [1474, 864], [1478, 850], [1482, 856], [1487, 845], [1490, 850], [1497, 828], [1502, 822], [1507, 834], [1512, 822], [1518, 819], [1523, 820], [1526, 800], [1529, 770], [1532, 748], [1535, 755], [1538, 730], [1541, 685], [1543, 670], [1545, 705], [1548, 715], [1552, 680], [1554, 675], [1556, 715], [1560, 735], [1564, 752], [1567, 718], [1570, 730], [1574, 750], [1578, 766], [1581, 755], [1584, 724], [1588, 735], [1592, 735], [1597, 745], [1601, 768], [1605, 793], [1609, 810], [1612, 788], [1617, 800], [1622, 808], [1627, 800], [1632, 812], [1638, 805], [1645, 822], [1649, 833], [1655, 828], [1662, 830], [1668, 838], [1673, 834], [1680, 852], [1686, 840], [1692, 822], [1697, 808], [1701, 812], [1706, 815], [1710, 832], [1716, 822], [1723, 826], [1730, 830], [1737, 826], [1741, 830]];

function drawPrice() {
    let seed = 7;
    const rnd = () => (seed = (seed * 16807) % 2147483647) / 2147483647;
    const mid = [];
    let k = 0;
    for (let x = 807; x <= 1741; x++) {
        while (x > pricePath[k + 1][0]) k++;
        const [x0, y0] = pricePath[k], [x1, y1] = pricePath[k + 1];
        mid.push(y0 + (y1 - y0) * (x - x0) / (x1 - x0));
    }
    let green = '', red = '', fast = '', slow = '';
    mid.forEach((y, i) => {
        const x = 807.5 + i;
        const amp = (930 - y) * 0.08;
        const hi = y - amp * (0.3 + rnd()), lo = y + amp * (0.3 + rnd());
        const bar = `M${x} ${hi.toFixed(1)}V${lo.toFixed(1)}`;
        if (rnd() > 0.42) green += bar; else red += bar;
        const avg = n => { const a = mid.slice(Math.max(0, i - n), i + 1); return a.reduce((p, c) => p + c) / a.length; };
        fast += `${i ? 'L' : 'M'}${x} ${avg(3).toFixed(1)}`;
        if (i > 18) slow += `${i > 19 ? 'L' : 'M'}${x} ${avg(24).toFixed(1)}`;
    });
    let s = frame(612, 923, 'bgPrice');
    s += line(green, '#3fc04a') + line(red, '#c8686c');
    s += line('M1542.500 629V700M1567.500 702V725M1554.500 690V772M1562.500 740V772M1726.500 825V845M1452.500 801V815', '#e05a60');
    s += line('M845.500 839V855M946.500 872V890M1206.500 885V895', '#c8686c');
    s += line(fast, '#2f6a55', 'stroke-opacity=".7"') + line(fast, '#5a3ac8', 'stroke-dasharray="4 5"');
    s += line(slow, '#35b8f5', 'stroke-dasharray="5 4" stroke-width="1.300"');

    const use = (id, x, y, w, h) => `<use href="#${id}" x="${x - w / 2}" y="${y}" width="${w}" height="${h}"/>`;
    [[893, 882], [941, 887], [964, 880], [989, 885], [1013, 888], [1037, 898], [1086, 899], [1134, 892], [1597, 731], [1684, 829], [1714, 811]]
        .forEach(([x, y]) => s += use('orderX', x, y - 6, 12, 12));
    [[891, 900], [939, 902], [963, 896], [988, 900], [1012, 904], [1535, 772], [1564, 755], [1594, 746], [1624, 820], [1682, 851], [1713, 834]]
        .forEach(([x, y]) => s += use('orderUp', x, y, 12, 14));
    [[1530, 732], [1558, 714], [1620, 783], [1619, 787]]
        .forEach(([x, y]) => s += rect(x + 0.5, y + 0.5, 12, 6, 'fill="url(#oDown)" stroke="#c8780a"'));

    // closing orders along the top edge
    s += rect(922, 613, 237, 16, 'rx="3" fill="#f3e3c3"') + rect(1513, 613, 232, 16, 'rx="3" fill="#f3e3c3"');
    [965, 989, 1014, 1038, 1063, 1111, 1560, 1594, 1625, 1655, 1713].forEach(x => s += line(`M${x + 0.5} 613v16`, '#f3d49c'));
    [[921, '1@557,0'], [967, '69,0'], [991, '86,0'], [1015, '38,0'], [1039, '87,3'], [1065, '2@364,0'], [1113, '2@470,0'], [1516, '2 orders'], [1564, '315,4'], [1596, '093,8'], [1626, '107,9'], [1659, '1@1 486,5'], [1715, '783,6']]
        .forEach(([x, t]) => s += text(x, 625, t));
    // opening orders along the bottom edge
    const tags = [[867, 917, '1@607,0'], [917, 965, '1@555,0'], [965, 988, '67,0'], [988, 1013, '91,0'], [1013, 1037, '29,0'], [1037, 1061, '01,0'], [1061, 1110, '1@368,0'], [1110, 1158, '1@476,0'],
        [1505, 1564, '1@2 751,4'], [1564, 1594, '014,0'], [1594, 1624, '121,8'], [1624, 1649, 'ders'], [1653, 1712, '1@1 392,7'], [1712, 1744, '679,8']];
    tags.forEach(([a, b, t]) => {
        s += rect(a + 0.5, 907.5, b - a, 16, 'rx="2" fill="#ccddfc" stroke="#6297ee"');
        s += text((b - a > 40 ? a + 3 : a + 1), 920, t);
    });
    s += text(808, 922, '© IT-Finance.com') + text(897, 922, 'Data is indicative', '', 'font-style="italic"');
    s += line('M806 923.5H1771', '#64808e');

    s += axis([[626, '5 000', 'strong'], [656, '4 500'], [687, '4 000'], [718, '3 500'], [748, '3 000'], [779, '2 500'], [809, '2 000'], [840, ''], [870, '1 000'], [901, '500']]);
    s += line('M1772 827.500h5', '#000', 'stroke-width="2"') + line('M1772 830.500h5', '#35a0c0', 'stroke-width="2"');
    s += rect(1776.5, 831.5, 39, 14, 'fill="#e3edf5" stroke="#7b929d"') + text(1778, 842, '1 647,6', '', 'fill="#1d9a38"');
    s += rect(1776.5, 812.5, 39, 15, 'fill="#f5ca12" stroke="#8a7a20"') + text(1778, 824, '1 701,2');

    const xs = [866, 914, 962, 1010, 1059, 1107, 1155, 1203, 1252, 1302, 1352, 1401, 1447, 1503, 1562, 1622, 1681, 1740];
    xs.forEach((x, i) => s += line(`M${x + 0.5} 924v4`, '#64808e') + text(x, 941, 1984 + i * 2, 'mid'));
    s += line('M805 945.5H1817', '#64808e');
    draw('priceChart', s);
}

drawPerformance();
drawEquity();
drawPositions();
drawPrice();
```
